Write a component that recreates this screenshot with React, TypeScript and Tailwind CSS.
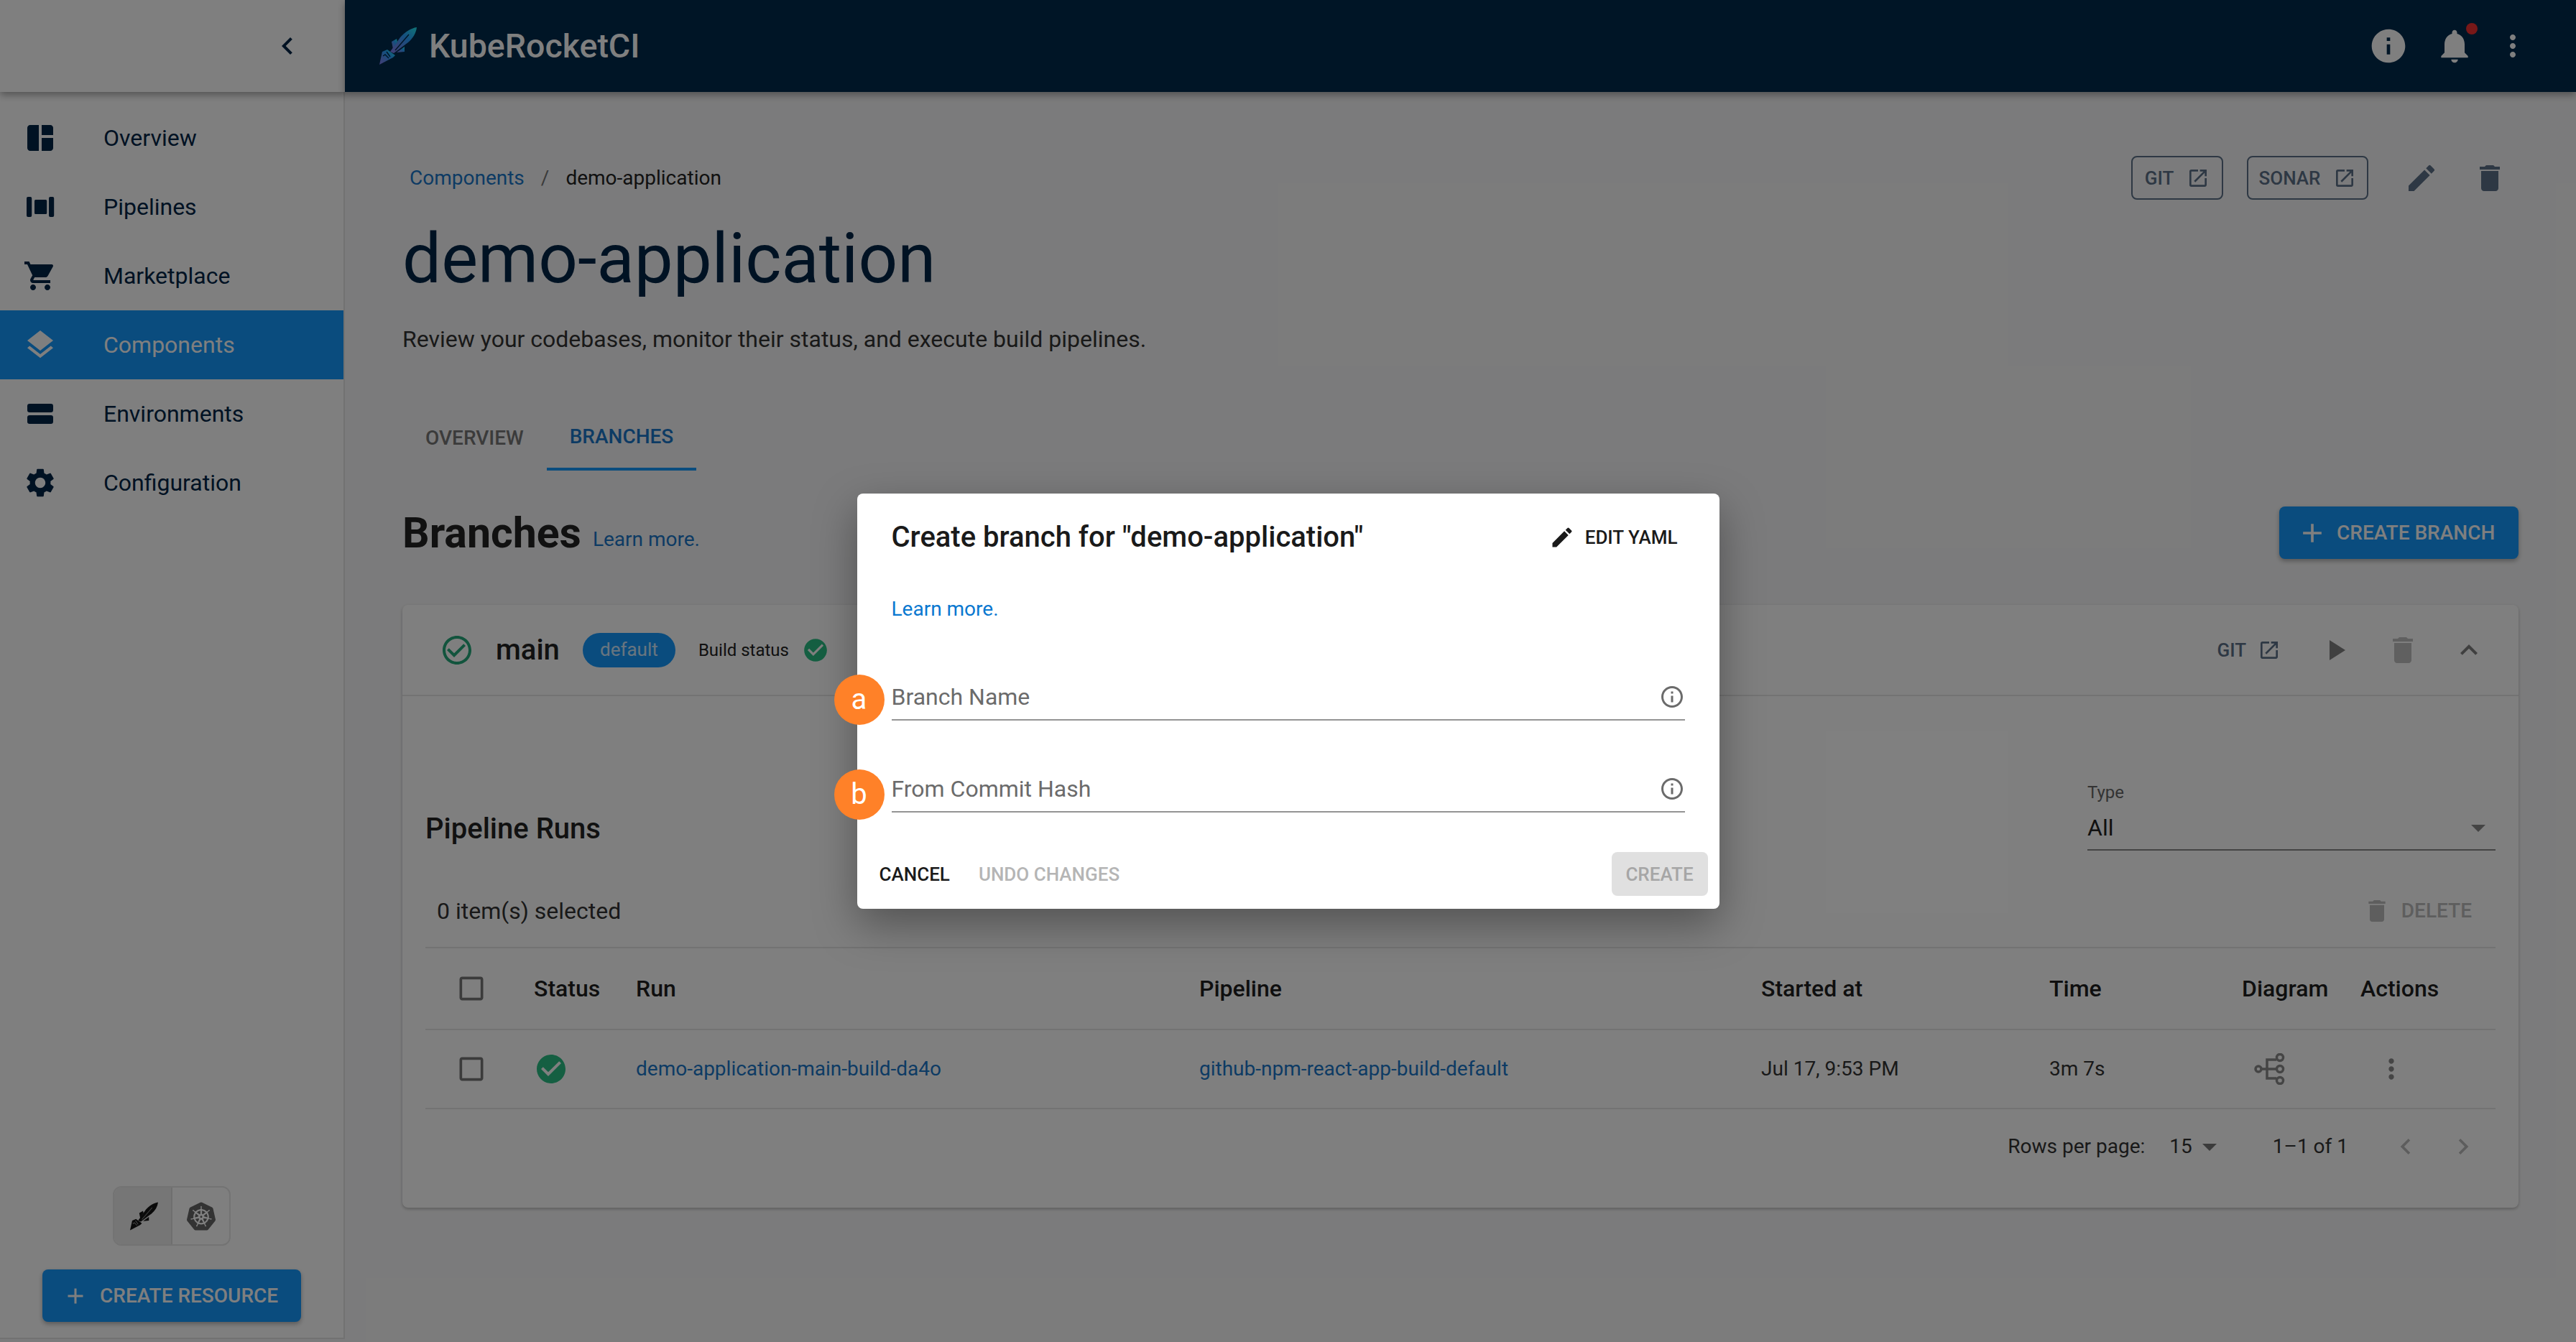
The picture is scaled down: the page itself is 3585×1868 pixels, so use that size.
import type { ReactNode } from 'react'
import {
  MdAdd,
  MdArrowDropDown,
  MdCheckBoxOutlineBlank,
  MdCheckCircle,
  MdCheckCircleOutline,
  MdChevronLeft,
  MdChevronRight,
  MdDelete,
  MdEdit,
  MdInfo,
  MdInfoOutline,
  MdKeyboardArrowUp,
  MdLayers,
  MdMoreVert,
  MdNotifications,
  MdOpenInNew,
  MdPlayArrow,
  MdSettings,
  MdShoppingCart,
  MdSpaceDashboard
} from 'react-icons/md'
import { SiKubernetes } from 'react-icons/si'

function EnvIcon({ size = 48 }: { size?: number }) {
  return (
    <svg width={size} height={size} viewBox="0 0 24 24" fill="currentColor">
      <rect x="3" y="5" width="18" height="6" rx="1.6" />
      <rect x="3" y="13" width="18" height="6" rx="1.6" />
    </svg>
  )
}

function PipelinesIcon({ size = 48 }: { size?: number }) {
  return (
    <svg width={size} height={size} viewBox="0 0 24 24" fill="currentColor">
      <rect x="2.5" y="5" width="3.6" height="14" rx="1" />
      <rect x="8" y="7" width="8.6" height="10" rx="0.8" />
      <rect x="18" y="5" width="3.6" height="14" rx="1" />
    </svg>
  )
}

function RocketLogo({ size = 64, mono = false }: { size?: number; mono?: boolean }) {
  const id = mono ? 'krm' : 'krg'
  const slit = mono ? '#8c8c8c' : '#002a4c'
  return (
    <svg width={size} height={size} viewBox="0 0 64 64">
      <defs>
        <linearGradient id={id} x1="0.1" y1="0.95" x2="0.95" y2="0.05">
          <stop offset="0" stopColor={mono ? '#141414' : '#7d80f0'} />
          <stop offset="0.3" stopColor={mono ? '#141414' : '#5a8cf0'} />
          <stop offset="0.6" stopColor={mono ? '#141414' : '#2a9fff'} />
          <stop offset="1" stopColor={mono ? '#141414' : '#20e0f0'} />
        </linearGradient>
      </defs>
      <g fill={`url(#${id})`}>
        <path d="M60 6 C52 7 43 13 37 20 L23 40 L28 42 L48 27 C55 21 59 14 60 6Z" />
        <path d="M25 26 L32 22 L33 26 L27 36Z" />
        <path d="M32 41 L43 33 L43 40Z" />
        <path d="M12 40 L19 37 L30 45 L27 48 L8 58Z" />
      </g>
      <path
        d="M49 16 L30 38 M18 40 L23 47 M13 46 L16 44 L21 49"
        stroke={slit}
        strokeWidth="1.4"
        fill="none"
      />
    </svg>
  )
}

function DiagramIcon() {
  return (
    <svg width="44" height="44" viewBox="0 0 44 44" fill="none" stroke="#8a8a8a" strokeWidth="3.5">
      <circle cx="6" cy="22" r="4" />
      <circle cx="36" cy="6" r="4.5" />
      <circle cx="36" cy="22" r="4.5" />
      <circle cx="36" cy="38" r="4.5" />
      <path d="M10 22 H31 M18 22 V9 H31 M18 22 V35 H31" />
    </svg>
  )
}

const navItems: { label: string; icon: ReactNode; active?: boolean }[] = [
  { label: 'Overview', icon: <MdSpaceDashboard size={48} /> },
  { label: 'Pipelines', icon: <PipelinesIcon /> },
  { label: 'Marketplace', icon: <MdShoppingCart size={48} /> },
  { label: 'Components', icon: <MdLayers size={48} />, active: true },
  { label: 'Environments', icon: <EnvIcon /> },
  { label: 'Configuration', icon: <MdSettings size={48} /> }
]

function Sidebar() {
  return (
    <aside className="flex h-[1864px] w-[480px] shrink-0 flex-col border-r-2 border-b-2 border-[#e4e4e4] bg-white">
      <div className="z-10 flex h-[128px] shrink-0 items-center justify-end bg-white pr-[56px] text-[#002446] shadow-[0_4px_10px_rgba(0,0,0,0.35)] -mr-[2px]">
        <MdChevronLeft size={48} />
      </div>
      <nav className="flex flex-col pt-[16px]">
        {navItems.map((item) => (
          <div
            key={item.label}
            className={`flex h-[96px] items-center gap-[64px] pl-[32px] text-[32px] ${
              item.active ? 'bg-[#1598fd] text-white' : 'text-[#002446]'
            }`}
          >
            <span className="flex w-[48px] items-center justify-center">{item.icon}</span>
            <span className="leading-none">{item.label}</span>
          </div>
        ))}
      </nav>
      <div className="mt-auto flex flex-col items-center pb-[22px]">
        <div className="flex h-[83px] w-[164px] overflow-hidden rounded-[12px] border-2 border-[#e6e6e6]">
          <div className="flex w-[81px] items-center justify-center border-r-2 border-[#dedede] bg-[#ececec]">
            <RocketLogo size={48} mono />
          </div>
          <div className="flex flex-1 items-center justify-center text-[#666]">
            <SiKubernetes size={40} />
          </div>
        </div>
        <button className="mt-[33px] flex h-[73px] w-[360px] items-center rounded-[8px] bg-[#1598fd] pl-[28px] text-[28px] font-medium text-white shadow-[0_3px_6px_rgba(0,0,0,0.3)]">
          <MdAdd size={36} />
          <span className="ml-[16px] leading-none">CREATE RESOURCE</span>
        </button>
      </div>
    </aside>
  )
}

function TopBar() {
  return (
    <header className="z-10 flex h-[128px] shrink-0 items-center bg-[#002a4c] pl-[40px] text-white shadow-[0_4px_10px_rgba(0,0,0,0.35)]">
      <RocketLogo size={64} />
      <span className="ml-[13px] text-[46.5px] font-medium leading-none">KubeRocketCI</span>
      <div className="relative ml-auto flex items-center">
        <MdInfo size={56} className="mr-[36px]" />
        <span className="relative mr-[29px]">
          <MdNotifications size={56} />
          <span className="absolute right-[-4px] top-[-4px] h-[16px] w-[16px] rounded-full bg-[#f03030]" />
        </span>
        <MdMoreVert size={48} className="mr-[64px]" />
      </div>
    </header>
  )
}

function OutlineLink({ label, width }: { label: string; width: string }) {
  return (
    <span className={`flex h-[61px] ${width} items-center justify-center gap-[18px] rounded-[8px] border-2 border-[#5c7188] text-[26px] font-medium leading-none text-[#5c7188]`}>
      {label}
      <MdOpenInNew size={32} />
    </span>
  )
}

const cols = 'grid grid-cols-[151px_142px_784px_782px_401px_268px_165px_187px]'

function RunsTable() {
  return (
    <div className="border-t-2 border-[#e6e6e6]">
      <div className={`${cols} h-[114px] items-center border-b-2 border-[#e6e6e6] text-[32px] font-medium text-[#1f1f1f]`}>
        <span className="flex pl-[42px] text-[#777]"><MdCheckBoxOutlineBlank size={44} /></span>
        <span>Status</span>
        <span>Run</span>
        <span>Pipeline</span>
        <span>Started at</span>
        <span>Time</span>
        <span>Diagram</span>
        <span>Actions</span>
      </div>
      <div className={`${cols} h-[110px] items-center border-b-2 border-[#e6e6e6] text-[28px] text-[#333]`}>
        <span className="flex pl-[42px] text-[#777]"><MdCheckBoxOutlineBlank size={44} /></span>
        <span className="flex text-[#2bbf85]"><MdCheckCircle size={48} /></span>
        <span className="text-[#1a77c9]">demo-application-main-build-da4o</span>
        <span className="text-[#1a77c9]">github-npm-react-app-build-default</span>
        <span>Jul 17, 9:53 PM</span>
        <span>3m 7s</span>
        <span className="flex pl-[17px]"><DiagramIcon /></span>
        <span className="flex text-[#8a8a8a]"><MdMoreVert size={44} className="ml-[21px]" /></span>
      </div>
      <div className="flex h-[104px] items-center justify-end pr-[23px] text-[28px] text-[#333]">
        <span>Rows per page:</span>
        <span className="ml-[34px]">15</span>
        <span className="text-[#777]"><MdArrowDropDown size={48} /></span>
        <span className="ml-[64px]">1–1 of 1</span>
        <span className="ml-[58px] flex text-[#bbb]"><MdChevronLeft size={44} /></span>
        <span className="ml-[36px] flex text-[#bbb]"><MdChevronRight size={44} /></span>
      </div>
    </div>
  )
}

function BranchCard() {
  return (
    <section className="mt-[64px] h-[839px] rounded-[8px] bg-white shadow-[0_2px_4px_rgba(0,0,0,0.25)]">
      <div className="flex h-[127px] items-center border-b-2 border-[#e6e6e6] pl-[52px] pr-[45px]">
        <span className="text-[#25a87a]"><MdCheckCircleOutline size={48} /></span>
        <span className="ml-[30px] text-[40px] font-medium leading-none text-[#222]">main</span>
        <span className="ml-[32px] flex h-[48px] w-[129px] items-center justify-center rounded-full bg-[#1598fd] text-[26px] text-white/80">default</span>
        <span className="ml-[32px] text-[24px] text-[#222]">Build status</span>
        <span className="ml-[18px] text-[#2bbf85]"><MdCheckCircle size={38} /></span>
        <span className="ml-auto text-[26px] font-medium leading-none text-[#5c7188]">GIT</span>
        <span className="ml-[16px] flex text-[#5c7188]"><MdOpenInNew size={32} /></span>
        <span className="ml-[52px] flex text-[#808080]"><MdPlayArrow size={48} /></span>
        <span className="ml-[46px] flex text-[#c0c0c0]"><MdDelete size={48} /></span>
        <span className="ml-[44px] flex text-[#808080]"><MdKeyboardArrowUp size={48} /></span>
      </div>
      <div className="px-[32px]">
        <div className="flex h-[224px] items-end pb-[9px]">
          <h3 className="mb-[10px] text-[40px] font-medium leading-none text-[#222]">Pipeline Runs</h3>
          <div className="ml-auto w-[568px] border-b-2 border-[#888]">
            <div className="text-[24px] leading-none text-[#666]">Type</div>
            <div className="mt-[7px] flex h-[60px] items-center justify-between text-[32px] leading-none text-[#222]">
              All
              <MdArrowDropDown size={48} className="text-[#888]" />
            </div>
          </div>
        </div>
        <div className="flex h-[125px] items-start justify-between pt-[59px] pl-[16px]">
          <span className="text-[32px] leading-none text-[#333]">0 item(s) selected</span>
          <span className="-mt-[4px] flex items-center pr-[33px] text-[28px] font-medium leading-none text-[#bdbdbd]">
            <MdDelete size={40} className="mr-[14px]" />
            DELETE
          </span>
        </div>
        <RunsTable />
      </div>
    </section>
  )
}

function Content() {
  return (
    <main className="flex-1 px-[80px] pt-[89px] text-[#222]">
      <div className="flex h-[61px] items-center">
        <span className="ml-[10px] text-[28px] text-[#1a77c9]">Components</span>
        <span className="ml-[23px] text-[28px] text-[#777]">/</span>
        <span className="ml-[23px] text-[28px]">demo-application</span>
        <div className="ml-auto flex items-center">
          <OutlineLink label="GIT" width="w-[128px]" />
          <span className="ml-[33px]"><OutlineLink label="SONAR" width="w-[169px]" /></span>
          <span className="ml-[50px] flex text-[#5c7188]"><MdEdit size={48} /></span>
          <span className="ml-[47px] mr-[16px] flex text-[#5c7188]"><MdDelete size={48} /></span>
        </div>
      </div>
      <h1 className="mt-[26px] text-[96px] font-normal leading-[112px] text-[#002446]">demo-application</h1>
      <p className="mt-[32px] text-[32px] leading-[48px] text-[#333]">Review your codebases, monitor their status, and execute build pipelines.</p>
      <div className="mt-[63px] flex h-[96px] text-[28px] font-medium">
        <span className="flex w-[201px] items-center pl-[32px] pt-[6px] text-[#777]">OVERVIEW</span>
        <span className="flex w-[208px] items-center justify-center border-b-4 border-[#1598fd] pt-[6px] text-[#1a77c9]">BRANCHES</span>
      </div>
      <div className="mt-[50px] flex h-[73px] items-center">
        <h2 className="text-[59px] font-bold leading-none text-[#222]">Branches</h2>
        <span className="ml-[16px] mt-[18px] text-[28px] text-[#1a77c9]">Learn more.</span>
        <button className="ml-auto flex h-[73px] w-[333px] items-center rounded-[8px] bg-[#1598fd] pl-[24px] text-[28px] font-medium text-white shadow-[0_3px_6px_rgba(0,0,0,0.3)]">
          <MdAdd size={44} />
          <span className="ml-[12px] leading-none">CREATE BRANCH</span>
        </button>
      </div>
      <BranchCard />
    </main>
  )
}

function Field({ label, badge, badgeTop }: { label: string; badge: string; badgeTop: string }) {
  return (
    <div className="relative flex h-[64px] items-center justify-between border-b-2 border-[#949494] text-[32px] text-[#6b6b6b]">
      <span className={`absolute left-[-80px] ${badgeTop} flex h-[70px] w-[70px] items-center justify-center rounded-full bg-[#ff8128] text-[40px] text-white`}>
        {badge}
      </span>
      <span className="leading-none">{label}</span>
      <MdInfoOutline size={36} />
    </div>
  )
}

function Dialog() {
  return (
    <div className="absolute inset-0 z-20 flex justify-center bg-black/50 pt-[687px]">
      <div className="h-[578px] w-[1200px] rounded-[8px] bg-white shadow-[0_22px_60px_rgba(0,0,0,0.35)]">
        <div className="flex h-[122px] items-center justify-between pl-[48px] pr-[58px]">
          <h2 className="text-[40px] font-medium leading-none text-[#1a1a1a]">Create branch for "demo-application"</h2>
          <span className="flex items-center text-[26px] font-medium leading-none text-[#1a1a1a]">
            <MdEdit size={36} className="mr-[14px]" />
            EDIT YAML
          </span>
        </div>
        <div className="pl-[48px] pr-[48px]">
          <a className="mt-[25px] block text-[28px] leading-none text-[#0a78d0]">Learn more.</a>
          <div className="mt-[77px]">
            <Field label="Branch Name" badge="a" badgeTop="top-0" />
          </div>
          <div className="mt-[64px]">
            <Field label="From Commit Hash" badge="b" badgeTop="top-[4px]" />
          </div>
        </div>
        <div className="mt-[55px] flex items-center pl-[31px] pr-[16px] text-[26px] font-medium leading-none">
          <span className="text-[#1a1a1a]">CANCEL</span>
          <span className="ml-[40px] text-[#b5b5b5]">UNDO CHANGES</span>
          <span className="ml-auto flex h-[61px] w-[134px] items-center justify-center rounded-[8px] bg-[#e0e0e0] text-[#a6a6a6]">CREATE</span>
        </div>
      </div>
    </div>
  )
}

export default function App() {
  return (
    <div className="relative flex h-[1868px] w-[3585px] overflow-hidden bg-[#f7f7f8] font-['Roboto',sans-serif]">
      <Sidebar />
      <div className="flex min-w-0 flex-1 flex-col">
        <TopBar />
        <Content />
      </div>
      <Dialog />
    </div>
  )
}
